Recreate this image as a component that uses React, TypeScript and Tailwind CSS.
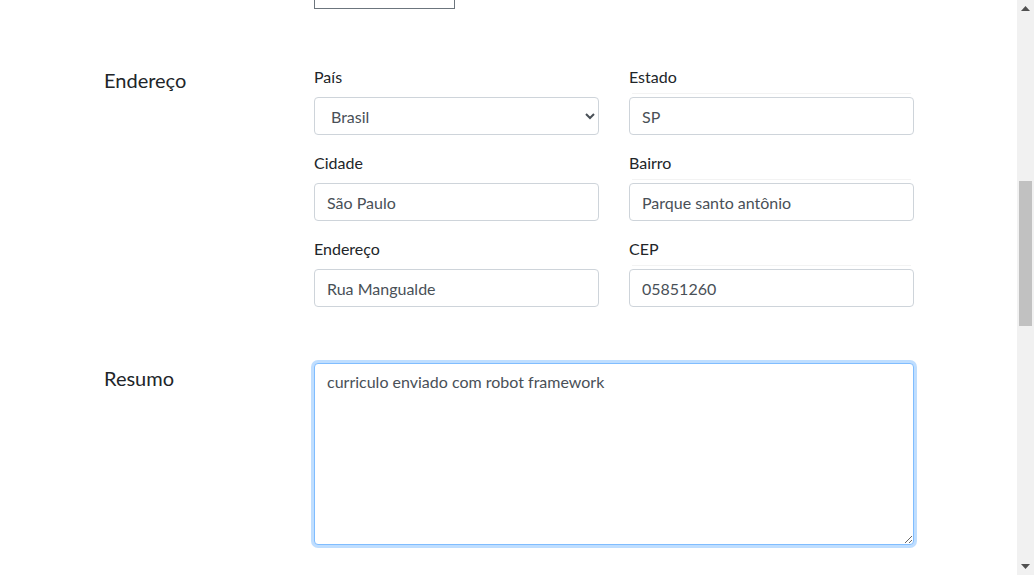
import { useEffect, useRef } from "react";

const inputCls =
  "block h-[38px] w-full rounded-[4px] border border-[#ced4da] bg-white px-3 text-[16px] leading-6 text-[#495057] outline-none";

function Field({
  label,
  value,
  line,
}: {
  label: string;
  value: string;
  line?: boolean;
}) {
  return (
    <div className="mb-4">
      <label className={`block leading-6 text-[#212529] ${line ? "mb-1" : "mb-2"}`}>
        {label}
      </label>
      {line && <div className="mx-[3px] mb-[3px] h-px bg-[#f3f3f3]" />}
      <input className={inputCls} defaultValue={value} readOnly />
    </div>
  );
}

function Scrollbar() {
  return (
    <div className="flex h-[575px] w-[17px] shrink-0 flex-col items-center bg-[#f1f1f1]">
      <div className="flex h-[17px] w-full items-center justify-center">
        <svg width="9" height="5" viewBox="0 0 9 5">
          <path d="M0 5 L4.5 0 L9 5 Z" fill="#505050" />
        </svg>
      </div>
      <div className="h-[164px]" />
      <div className="h-[145px] w-[13px] bg-[#c1c1c1]" />
      <div className="flex-1" />
      <div className="flex h-[17px] w-full items-center justify-center">
        <svg width="9" height="5" viewBox="0 0 9 5">
          <path d="M0 0 L9 0 L4.5 5 Z" fill="#505050" />
        </svg>
      </div>
    </div>
  );
}

export default function App() {
  const areaRef = useRef<HTMLTextAreaElement>(null);
  const resumo = "curriculo enviado com robot framework";

  useEffect(() => {
    const el = areaRef.current;
    if (el) {
      el.focus();
      el.setSelectionRange(resumo.length, resumo.length);
    }
  }, []);

  return (
    <div
      className="flex h-[575px] w-[1034px] overflow-hidden bg-white text-[16px] text-[#212529]"
      style={{ fontFamily: "Lato, 'Noto Sans', sans-serif" }}
    >
      <div className="flex-1 pl-[104px]">
        {/* previous field, cut off at the top */}
        <div className="grid grid-cols-[210px_600px]">
          <div />
          <div className="mb-[56px] h-[9px] w-[141px] border-x border-b border-[#6c757d]" />
        </div>

        <section className="mb-10 grid grid-cols-[210px_600px]">
          <h3 className="text-[20px] leading-[30px] text-[#212529]">Endereço</h3>
          <div className="grid grid-cols-2 gap-x-[30px]">
            <div className="mb-4">
              <label className="mb-2 block leading-6">País</label>
              <select
                className="block h-[38px] w-full rounded-[4px] border border-[#ced4da] bg-white px-3 text-[16px] text-[#495057] outline-none"
                defaultValue="Brasil"
              >
                <option>Brasil</option>
                <option>Portugal</option>
              </select>
            </div>
            <Field label="Estado" value="SP" line />
            <Field label="Cidade" value="São Paulo" />
            <Field label="Bairro" value="Parque santo antônio" line />
            <Field label="Endereço" value="Rua Mangualde" />
            <Field label="CEP" value="05851260" line />
          </div>
        </section>

        <section className="grid grid-cols-[210px_600px]">
          <h3 className="text-[20px] leading-[30px] text-[#212529]">Resumo</h3>
          <textarea
            ref={areaRef}
            className="block h-[182px] w-full rounded-[4px] border border-[#80bdff] bg-white px-3 py-[6px] text-[16px] leading-6 text-[#495057] caret-black shadow-[0_0_0_3px_rgba(0,123,255,0.25)] outline-none"
            defaultValue={resumo}
          />
        </section>
      </div>
      <Scrollbar />
    </div>
  );
}
